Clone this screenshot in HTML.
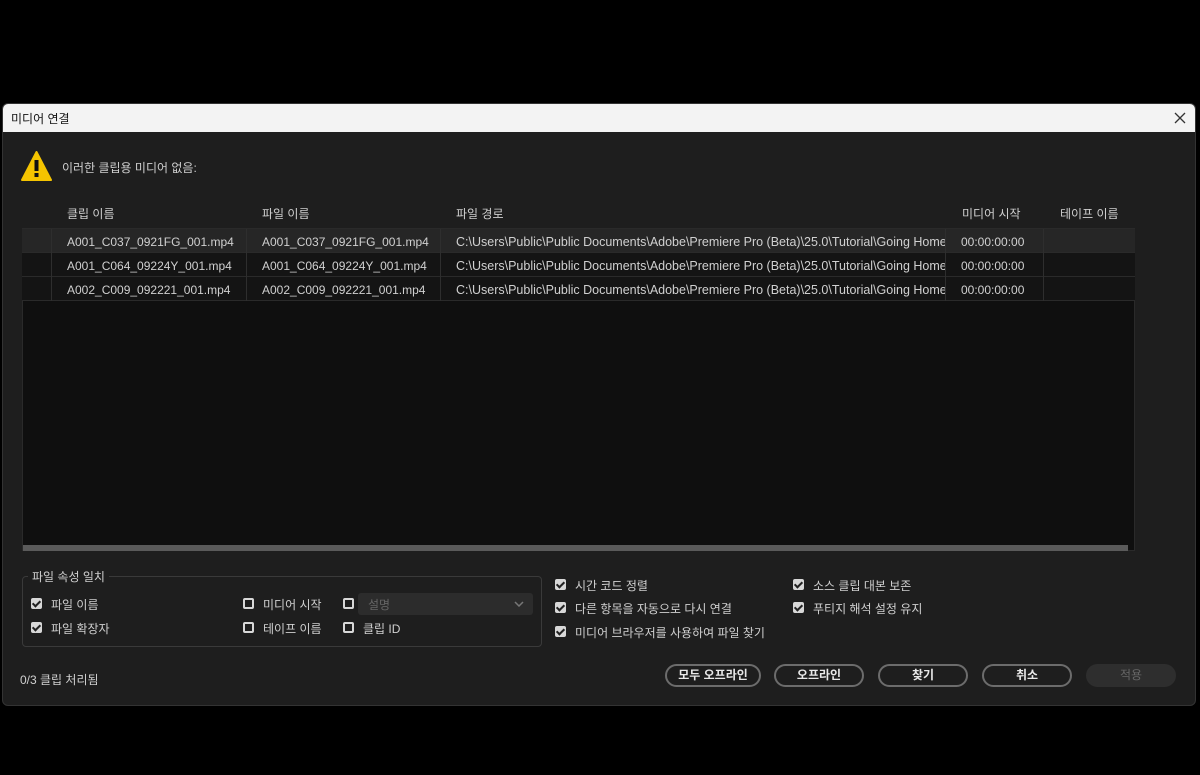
<!DOCTYPE html>
<html><head><meta charset="utf-8"><style>
*{margin:0;padding:0;box-sizing:border-box}
body{width:1200px;height:775px;background:#000;position:relative;overflow:hidden;font-family:"Liberation Sans","Noto Sans CJK KR",sans-serif;font-size:12px;color:#d0d0d0}
.a{position:absolute}
.win{left:2px;top:103px;width:1194px;height:603px;background:#1e1e1e;border-radius:6px;overflow:hidden;border:1px solid #333}
.title{left:0;top:0;width:100%;height:28px;background:#f3f3f3;color:#111;font-size:12px;padding:6px 8px}
.row{left:22px;width:1113px;height:24px;border-bottom:1px solid #2a2a2a}
.c{position:absolute;top:0;height:24px;line-height:26px;border-right:1px solid #2e2e2e;padding-left:15px;white-space:nowrap;overflow:hidden}
.cb{width:11px;height:11px;background:#d8d8d8;border-radius:2px;position:absolute}
.cb::after{content:"";position:absolute;left:3px;top:1px;width:3px;height:6px;border:solid #222;border-width:0 2px 2px 0;transform:rotate(45deg)}
.ub{width:11px;height:11px;border:2px solid #d8d8d8;border-radius:2px;position:absolute}
.btn{top:664px;height:23px;border:2px solid #6c6c6c;border-radius:12px;text-align:center;line-height:19px;font-weight:bold;color:#e8e8e8}
.p{font-size:12.5px}
</style></head><body>
<div class="a win">
<div class="a title">미디어 연결</div>
<svg class="a" style="right:9px;top:8px" width="12" height="12"><path d="M1 1L11 11M11 1L1 11" stroke="#333" stroke-width="1.3"/></svg>
</div>
<svg class="a" style="left:21px;top:151px" width="31" height="30"><polygon points="15.5,1 30,29 1,29" fill="#f5c400" stroke="#f5c400" stroke-linejoin="round" stroke-width="2"/><rect x="13.5" y="9" width="4" height="11" fill="#111"/><rect x="13.5" y="22" width="4" height="4" fill="#111"/></svg>
<div class="a" style="left:62px;top:159px">이러한 클립용 미디어 없음:</div>
<div class="a" style="left:67px;top:205px">클립 이름</div>
<div class="a" style="left:262px;top:205px">파일 이름</div>
<div class="a" style="left:456px;top:205px">파일 경로</div>
<div class="a" style="left:962px;top:205px">미디어 시작</div>
<div class="a" style="left:1060px;top:205px">테이프 이름</div>
<div class="a" style="left:22px;top:228px;width:1113px;height:323px;background:#0f0f0f;border:1px solid #2a2a2a"></div>
<div class="a row" style="top:229px;background:#262626">
<div class="c" style="left:0;width:30px"></div><div class="c" style="left:30px;width:195px">A001_C037_0921FG_001.mp4</div><div class="c" style="left:225px;width:194px">A001_C037_0921FG_001.mp4</div><div class="c p" style="left:419px;width:505px">C:\Users\Public\Public Documents\Adobe\Premiere Pro (Beta)\25.0\Tutorial\Going Home</div><div class="c" style="left:924px;width:98px">00:00:00:00</div></div>
<div class="a row" style="top:253px;background:#141414">
<div class="c" style="left:0;width:30px"></div><div class="c" style="left:30px;width:195px">A001_C064_09224Y_001.mp4</div><div class="c" style="left:225px;width:194px">A001_C064_09224Y_001.mp4</div><div class="c p" style="left:419px;width:505px">C:\Users\Public\Public Documents\Adobe\Premiere Pro (Beta)\25.0\Tutorial\Going Home</div><div class="c" style="left:924px;width:98px">00:00:00:00</div></div>
<div class="a row" style="top:277px;background:#141414">
<div class="c" style="left:0;width:30px"></div><div class="c" style="left:30px;width:195px">A002_C009_092221_001.mp4</div><div class="c" style="left:225px;width:194px">A002_C009_092221_001.mp4</div><div class="c p" style="left:419px;width:505px">C:\Users\Public\Public Documents\Adobe\Premiere Pro (Beta)\25.0\Tutorial\Going Home</div><div class="c" style="left:924px;width:98px">00:00:00:00</div></div>
<div class="a" style="left:23px;top:545px;width:1105px;height:6px;background:#5a5a5a"></div>
<div class="a" style="left:22px;top:576px;width:520px;height:71px;border:1px solid #3a3a3a;border-radius:4px"></div>
<div class="a" style="left:28px;top:568px;background:#1e1e1e;padding:0 4px">파일 속성 일치</div>
<div class="cb" style="left:31px;top:598px"></div><div class="a" style="left:51px;top:596px">파일 이름</div>
<div class="cb" style="left:31px;top:622px"></div><div class="a" style="left:51px;top:620px">파일 확장자</div>
<div class="ub" style="left:243px;top:598px"></div><div class="a" style="left:263px;top:596px">미디어 시작</div>
<div class="ub" style="left:243px;top:622px"></div><div class="a" style="left:263px;top:620px">테이프 이름</div>
<div class="ub" style="left:343px;top:598px"></div>
<div class="a" style="left:358px;top:593px;width:175px;height:22px;background:#2c2c2c;border-radius:3px;color:#666;padding:3px 10px">설명<svg style="position:absolute;right:9px;top:8px" width="10" height="6"><path d="M1 1L5 5L9 1" stroke="#777" stroke-width="1.5" fill="none"/></svg></div>
<div class="ub" style="left:343px;top:622px"></div><div class="a" style="left:363px;top:620px">클립 ID</div>
<div class="cb" style="left:555px;top:579px"></div><div class="a" style="left:575px;top:577px">시간 코드 정렬</div>
<div class="cb" style="left:555px;top:602px"></div><div class="a" style="left:575px;top:600px">다른 항목을 자동으로 다시 연결</div>
<div class="cb" style="left:555px;top:626px"></div><div class="a" style="left:575px;top:624px">미디어 브라우저를 사용하여 파일 찾기</div>
<div class="cb" style="left:793px;top:579px"></div><div class="a" style="left:813px;top:577px">소스 클립 대본 보존</div>
<div class="cb" style="left:793px;top:602px"></div><div class="a" style="left:813px;top:600px">푸티지 해석 설정 유지</div>
<div class="a" style="left:20px;top:671px">0/3 클립 처리됨</div>
<div class="a btn" style="left:665px;width:96px">모두 오프라인</div>
<div class="a btn" style="left:774px;width:90px">오프라인</div>
<div class="a btn" style="left:878px;width:90px">찾기</div>
<div class="a btn" style="left:982px;width:90px">취소</div>
<div class="a btn" style="left:1086px;width:90px;border-color:#2e2e2e;background:#2e2e2e;color:#666;font-weight:normal">적용</div>
</body></html>
